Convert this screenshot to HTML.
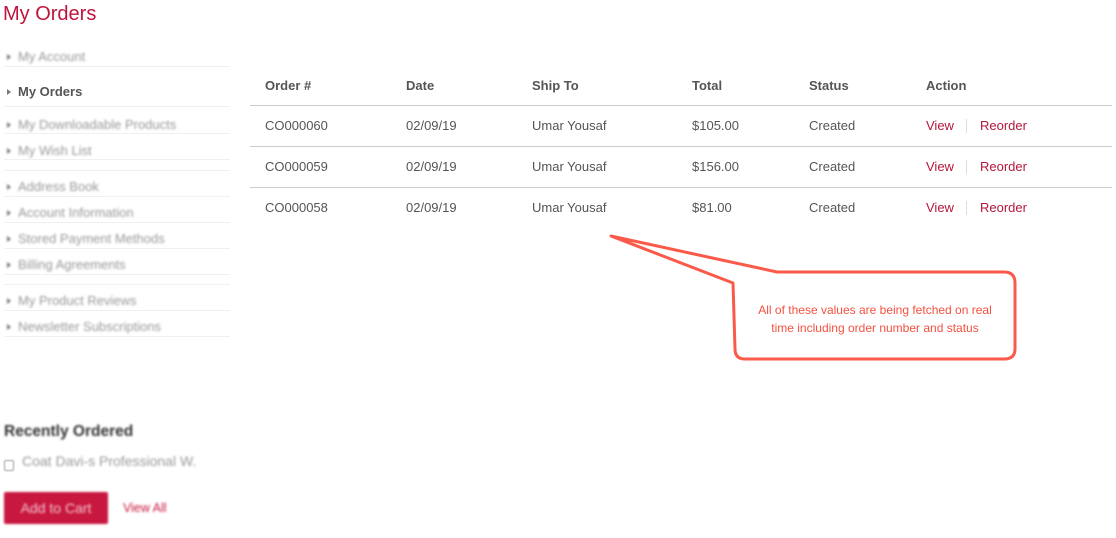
<!DOCTYPE html>
<html><head><meta charset="utf-8"><style>
*{margin:0;padding:0;box-sizing:border-box}
body{width:1116px;height:538px;background:#fff;font-family:"Liberation Sans",Arial,sans-serif;position:relative;overflow:hidden;color:#555}
.a{position:absolute;white-space:nowrap}
h1{position:absolute;left:3px;top:3px;font-size:20px;font-weight:normal;color:#c0143c}
.sb{position:absolute;left:7px;font-size:13px;color:#999;filter:blur(1.1px)}
.sb:before{content:"";display:inline-block;border-left:4px solid #777;border-top:3px solid transparent;border-bottom:3px solid transparent;margin-right:7px;vertical-align:1px}
.ln{position:absolute;left:4px;width:226px;height:1px;background:#f0f0f0}
.th{position:absolute;top:78px;font-size:13px;font-weight:bold;color:#555}
.td{position:absolute;font-size:13px;color:#555}
.hr{position:absolute;left:250px;width:862px;height:1px;background:#ccc}
.red{color:#b5173c}
</style></head><body>
<h1>My Orders</h1>
<div class="sb" style="top:49px">My Account</div>
<div class="ln" style="top:66px"></div>
<div class="sb" style="top:84px;color:#555;font-weight:bold;font-size:13px;filter:none">My Orders</div>
<div class="ln" style="top:106px"></div>
<div class="sb" style="top:117px">My Downloadable Products</div>
<div class="ln" style="top:133px"></div>
<div class="sb" style="top:143px">My Wish List</div>
<div class="ln" style="top:159px"></div>
<div class="ln" style="top:170px"></div>
<div class="sb" style="top:179px">Address Book</div>
<div class="ln" style="top:196px"></div>
<div class="sb" style="top:205px">Account Information</div>
<div class="ln" style="top:222px"></div>
<div class="sb" style="top:231px">Stored Payment Methods</div>
<div class="ln" style="top:248px"></div>
<div class="sb" style="top:257px">Billing Agreements</div>
<div class="ln" style="top:274px"></div>
<div class="ln" style="top:284px"></div>
<div class="sb" style="top:293px">My Product Reviews</div>
<div class="ln" style="top:310px"></div>
<div class="sb" style="top:319px">Newsletter Subscriptions</div>
<div class="ln" style="top:336px"></div>

<div class="a" style="left:4px;top:423px;font-size:15.5px;font-weight:bold;color:#333;filter:blur(1.1px)">Recently Ordered</div>
<div class="a" style="left:4px;top:460px;width:10px;height:11px;border:1px solid #999;border-radius:2px;filter:blur(0.8px)"></div>
<div class="a" style="left:22px;top:453px;font-size:14px;color:#999;filter:blur(1.1px)">Coat Davi-s Professional W.</div>
<div class="a" style="left:4px;top:492px;width:104px;height:32px;background:#c8183f;border-radius:2px;color:#f4c4cf;font-size:14px;line-height:32px;text-align:center;filter:blur(1.1px)">Add to Cart</div>
<div class="a" style="left:123px;top:501px;font-size:12.5px;color:#c8183f;filter:blur(1.1px)">View All</div>

<div class="th" style="left:265px">Order #</div>
<div class="th" style="left:406px">Date</div>
<div class="th" style="left:532px">Ship To</div>
<div class="th" style="left:692px">Total</div>
<div class="th" style="left:809px">Status</div>
<div class="th" style="left:926px">Action</div>
<div class="hr" style="top:105px"></div>
<div class="hr" style="top:146px"></div>
<div class="hr" style="top:187px"></div>

<div class="td" style="left:265px;top:118px">CO000060</div>
<div class="td" style="left:406px;top:118px">02/09/19</div>
<div class="td" style="left:532px;top:118px">Umar Yousaf</div>
<div class="td" style="left:692px;top:118px">$105.00</div>
<div class="td" style="left:809px;top:118px">Created</div>
<div class="td red" style="left:926px;top:118px">View</div>
<div class="a" style="left:966px;top:119px;width:1px;height:14px;background:#ddd"></div>
<div class="td red" style="left:980px;top:118px">Reorder</div>

<div class="td" style="left:265px;top:159px">CO000059</div>
<div class="td" style="left:406px;top:159px">02/09/19</div>
<div class="td" style="left:532px;top:159px">Umar Yousaf</div>
<div class="td" style="left:692px;top:159px">$156.00</div>
<div class="td" style="left:809px;top:159px">Created</div>
<div class="td red" style="left:926px;top:159px">View</div>
<div class="a" style="left:966px;top:160px;width:1px;height:14px;background:#ddd"></div>
<div class="td red" style="left:980px;top:159px">Reorder</div>

<div class="td" style="left:265px;top:200px">CO000058</div>
<div class="td" style="left:406px;top:200px">02/09/19</div>
<div class="td" style="left:532px;top:200px">Umar Yousaf</div>
<div class="td" style="left:692px;top:200px">$81.00</div>
<div class="td" style="left:809px;top:200px">Created</div>
<div class="td red" style="left:926px;top:200px">View</div>
<div class="a" style="left:966px;top:201px;width:1px;height:14px;background:#ddd"></div>
<div class="td red" style="left:980px;top:200px">Reorder</div>

<svg class="a" style="left:0;top:0" width="1116" height="538">
<path d="M611,236 L777,272 L1004,272 Q1015,272 1015,283 L1015,349 Q1015,359 1004,359 L745,359 Q735,359 735,349 L733,283 Z" fill="#fff" stroke="#fb5a4b" stroke-width="3" stroke-linejoin="round"/>
</svg>
<div class="a" style="left:735px;top:301px;width:280px;text-align:center;font-size:12px;line-height:18px;color:#f5503f;white-space:normal">All of these values are being fetched on real<br>time including order number and status</div>
</body></html>
